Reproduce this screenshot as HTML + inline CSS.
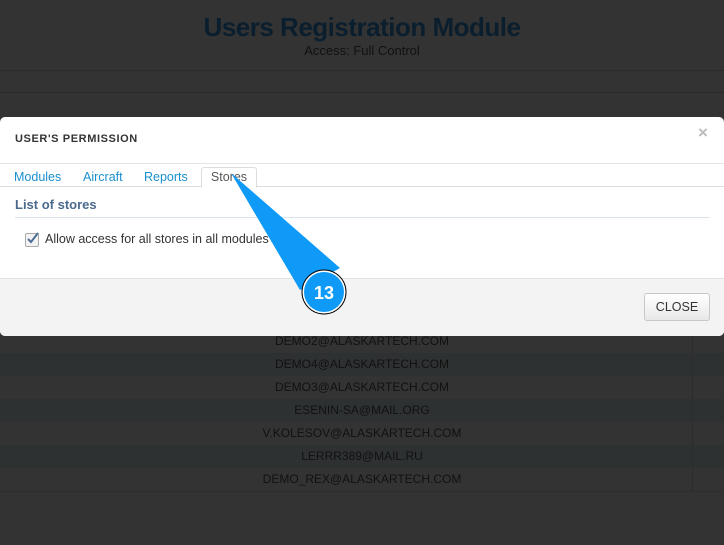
<!DOCTYPE html>
<html><head><style>
html,body{margin:0;width:724px;height:545px;background:#fff;font-family:"Liberation Sans",sans-serif;position:relative;overflow:hidden}
.abs{position:absolute}
.row{position:absolute;left:0;width:724px;height:23px;text-align:center;font-size:12px;color:#555;line-height:23px}
</style></head><body>
<div class="abs" style="left:0;top:12px;width:724px;text-align:center;font-size:26px;font-weight:bold;color:#3296e6;letter-spacing:-0.5px">Users Registration Module</div>
<div class="abs" style="left:0;top:43px;width:724px;text-align:center;font-size:13px;color:#555">Access: Full Control</div>
<div class="abs" style="left:0;top:70px;width:724px;height:1px;background:#d2d2d2"></div>
<div class="abs" style="left:0;top:92px;width:724px;height:1px;background:#d2d2d2"></div>
<div class="row" style="top:330px;background:#fff">DEMO2@ALASKARTECH.COM</div>
<div class="row" style="top:353px;background:#e6f3fa">DEMO4@ALASKARTECH.COM</div>
<div class="row" style="top:376px;background:#fff">DEMO3@ALASKARTECH.COM</div>
<div class="row" style="top:399px;background:#e6f3fa">ESENIN-SA@MAIL.ORG</div>
<div class="row" style="top:422px;background:#fff">V.KOLESOV@ALASKARTECH.COM</div>
<div class="row" style="top:445px;background:#e6f3fa">LERRR389@MAIL.RU</div>
<div class="row" style="top:468px;background:#fff">DEMO_REX@ALASKARTECH.COM</div>
<div class="abs" style="left:0;top:491px;width:724px;height:1px;background:#e6e6e6"></div>
<div class="abs" style="left:692px;top:330px;width:1px;height:161px;background:#dcdcdc"></div>
<div class="abs" style="left:0;top:0;width:724px;height:545px;background:rgba(0,0,0,0.8)"></div>

<div class="abs" style="left:0;top:117px;width:724px;height:219px;background:#fff;border-radius:5px;overflow:hidden">
 <div class="abs" style="left:15px;top:16px;font-size:11px;font-weight:bold;color:#333;letter-spacing:0.6px">USER'S PERMISSION</div>
 <div class="abs" style="left:698px;top:6px;font-size:17px;font-weight:bold;color:#bbb">×</div>
 <div class="abs" style="left:0;top:46px;width:724px;height:1px;background:#e5e5e5"></div>
 <div class="abs" style="left:0;top:69px;width:724px;height:1px;background:#ddd"></div>
 <div class="abs" style="left:14px;top:53px;font-size:12.5px;color:#1a8fd0">Modules</div>
 <div class="abs" style="left:83px;top:53px;font-size:12.5px;color:#1a8fd0">Aircraft</div>
 <div class="abs" style="left:144px;top:53px;font-size:12.5px;color:#1a8fd0">Reports</div>
 <div class="abs" style="left:201px;top:50px;width:54px;height:19px;border:1px solid #ddd;border-bottom:1px solid #fff;border-radius:3px 3px 0 0;background:#fff;font-size:12.5px;color:#555;text-align:center;line-height:19px">Stores</div>
 <div class="abs" style="left:15px;top:80px;font-size:13px;font-weight:bold;color:#4b6a8e">List of stores</div>
 <div class="abs" style="left:15px;top:100px;width:695px;height:1px;background:#dde3ea"></div>
 <div class="abs" style="left:25px;top:116px;width:12px;height:12px;border:1px solid #aaa;border-radius:2px;background:#f3f3f3"></div>
 <svg class="abs" style="left:25px;top:113px" width="16" height="16"><path d="M3 9 L6 12 L13 3" stroke="#4d6d94" stroke-width="2" fill="none"/></svg>
 <div class="abs" style="left:45px;top:115px;font-size:12.5px;color:#333">Allow access for all stores in all modules</div>
 <div class="abs" style="left:0;top:161px;width:724px;height:58px;background:#f3f3f3;border-top:1px solid #e2e2e2"></div>
 <div class="abs" style="left:644px;top:176px;width:64px;height:26px;border:1px solid #c8c8c8;border-radius:3px;background:linear-gradient(#fff,#e8e8e8);font-size:12.5px;color:#333;text-align:center;line-height:26px">CLOSE</div>
</div>

<svg class="abs" style="left:0;top:0" width="724" height="545">
 <polygon points="231,173 300,290 340,268" fill="#0f9af7"/>
 <circle cx="324" cy="292" r="22" fill="#fff" stroke="#000" stroke-width="1"/>
 <circle cx="324" cy="292" r="20" fill="#0f9af7"/>
 <text x="324" y="299" text-anchor="middle" font-family="Liberation Sans" font-weight="bold" font-size="18" fill="#fff">13</text>
</svg>
</body></html>
